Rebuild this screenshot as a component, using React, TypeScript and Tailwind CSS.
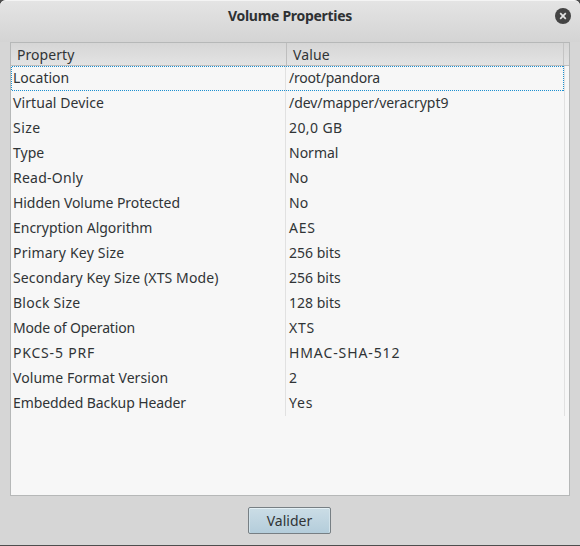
type Row = { name: string; value: string; nameTracking?: string; valueTracking?: string };

const rows: Row[] = [
  { name: 'Location', value: '/root/pandora', valueTracking: 'tracking-[-0.2px]' },
  { name: 'Virtual Device', value: '/dev/mapper/veracrypt9', nameTracking: 'tracking-[0.08px]', valueTracking: 'tracking-[-0.05px]' },
  { name: 'Size', value: '20,0 GB', nameTracking: 'tracking-[0.45px]', valueTracking: 'tracking-[0.4px]' },
  { name: 'Type', value: 'Normal' },
  { name: 'Read-Only', value: 'No', nameTracking: 'tracking-[0.25px]' },
  { name: 'Hidden Volume Protected', value: 'No', nameTracking: 'tracking-[-0.07px]' },
  { name: 'Encryption Algorithm', value: 'AES', nameTracking: 'tracking-[-0.03px]', valueTracking: 'tracking-[0.8px]' },
  { name: 'Primary Key Size', value: '256 bits', nameTracking: 'tracking-[0.2px]' },
  { name: 'Secondary Key Size (XTS Mode)', value: '256 bits', nameTracking: 'tracking-[0.11px]' },
  { name: 'Block Size', value: '128 bits', nameTracking: 'tracking-[0.26px]' },
  { name: 'Mode of Operation', value: 'XTS', nameTracking: 'tracking-[-0.17px]', valueTracking: 'tracking-[0.8px]' },
  { name: 'PKCS-5 PRF', value: 'HMAC-SHA-512', nameTracking: 'tracking-[0.8px]', valueTracking: 'tracking-[0.9px]' },
  { name: 'Volume Format Version', value: '2', nameTracking: 'tracking-[0.06px]' },
  { name: 'Embedded Backup Header', value: 'Yes', nameTracking: 'tracking-[-0.1px]', valueTracking: 'tracking-[0.8px]' },
];

function TitleBar() {
  return (
    <header className="relative flex h-[42px] shrink-0 justify-center rounded-t-[6px] border-t border-[#f4f4f4] bg-linear-to-b from-[#e4e4e4] to-[#d4d4d4] pt-[5px]">
      <h1 className="text-[14px] leading-5 font-bold tracking-[-0.29px] text-[#2e3133]">Volume Properties</h1>
      <button aria-label="Close" className="absolute top-[7px] right-[9px] size-4">
        <svg viewBox="0 0 16 16" className="size-4">
          <circle cx="8" cy="8" r="8" fill="#444" />
          <path d="M5.2 5.2L10.8 10.8M10.8 5.2L5.2 10.8" stroke="#e4e4e4" strokeWidth="1.7" />
        </svg>
      </button>
    </header>
  );
}

function FocusRing() {
  return (
    <svg className="absolute top-0 left-0 h-[25px] w-[553px]" viewBox="0 0 553 25" fill="none">
      <path d="M1 0.5H553M1 24.5H553M0.5 1V25M552.5 0V25" stroke="#1b8fd0" strokeDasharray="1 1" />
    </svg>
  );
}

function PropertyTable() {
  return (
    <main className="mx-[10px] flex h-[454px] shrink-0 flex-col border border-[#b6b8b8] bg-[#f7f7f7]">
      <div className="flex h-[23px] shrink-0 border-b border-[#bebebe] bg-linear-to-b from-[#d6d6d6] to-[#e3e3e3] leading-[23px]">
        <div className="w-[276px] border-r border-[#bebebe] pl-[6px] tracking-[0.06px]">Property</div>
        <div className="w-[277px] border-r border-[#c4c4c4] pl-[6px] tracking-[0.1px]">Value</div>
      </div>
      {rows.map((row, i) => (
        <div key={row.name} className="relative flex h-[25px] shrink-0 leading-[24px] whitespace-nowrap">
          <div className="w-[275px] border-r border-[#e1e1e1] pl-[2px]">
            <span className={row.nameTracking}>{row.name}</span>
          </div>
          <div className="w-[279px] border-r border-[#e1e1e1] pl-[3px]">
            <span className={row.valueTracking}>{row.value}</span>
          </div>
          {i === 0 && <FocusRing />}
        </div>
      ))}
    </main>
  );
}

export default function App() {
  return (
    <div className="h-[546px] w-[580px] overflow-hidden bg-[#4e4e4e] font-['Noto_Sans',sans-serif] text-[14px] text-[#303436]">
      <div className="flex h-[545px] flex-col rounded-t-[6px] bg-[#d6d6d6]">
        <TitleBar />
        <PropertyTable />
        <footer className="flex justify-center pt-[11px]">
          <button className="mr-[1px] h-[27px] w-[83px] rounded-[2px] border border-[#777f84] bg-linear-to-b from-[#cbdde6] to-[#b4cddb] leading-[25px] shadow-[inset_0_1px_0_#e4f0f5,inset_1px_0_0_#d2e3eb,inset_-1px_0_0_#d2e3eb]">
            Valider
          </button>
        </footer>
      </div>
    </div>
  );
}
